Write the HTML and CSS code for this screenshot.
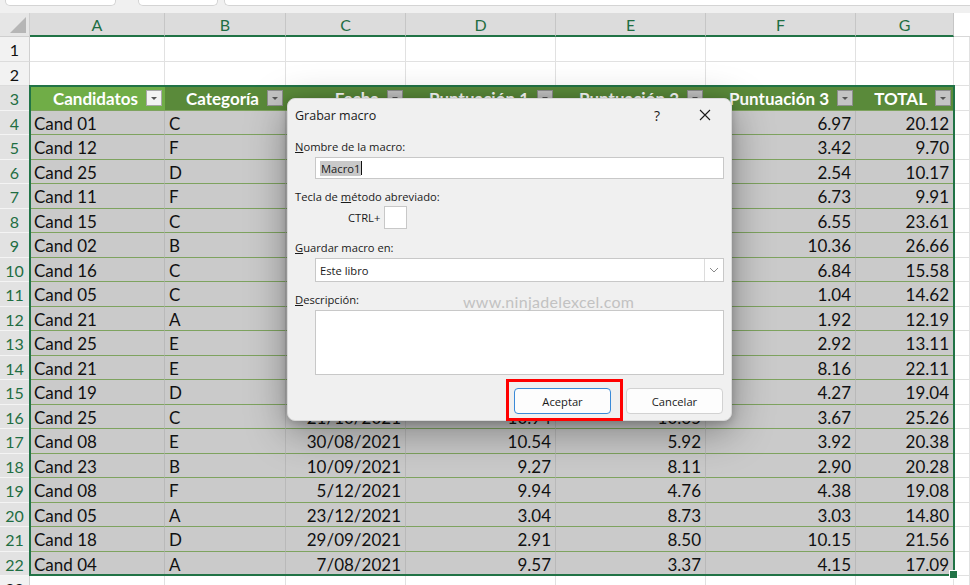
FILE: index.html
```html
<!DOCTYPE html>
<html lang="es">
<head>
  <meta charset="UTF-8">
  <title>Grabar macro</title>
  <link rel="stylesheet" href="styles.css">
</head>
<body>
  <div class="topbar">
    <div class="tb-box tb-name"></div>
    <div class="tb-box tb-mid"></div>
    <div class="tb-box tb-formula"></div>
  </div>

  <div class="sheet">
    <div class="row colhead">
      <div class="corner"><span class="tri"></span></div>
      <div class="ch sel">A</div><div class="ch sel">B</div><div class="ch sel">C</div><div class="ch sel">D</div>
      <div class="ch sel">E</div><div class="ch sel">F</div><div class="ch sel">G</div><div class="ch"></div>
    </div>

    <div class="row">
      <div class="rh">1</div>
      <div class="c"></div><div class="c"></div><div class="c"></div><div class="c"></div><div class="c"></div><div class="c"></div><div class="c"></div><div class="c"></div>
    </div>
    <div class="row">
      <div class="rh">2</div>
      <div class="c"></div><div class="c"></div><div class="c"></div><div class="c"></div><div class="c"></div><div class="c"></div><div class="c"></div><div class="c"></div>
    </div>

    <div class="row thead">
      <div class="rh on">3</div>
      <div class="h active">Candidatos<span class="fb"></span></div>
      <div class="h">Categoría<span class="fb"></span></div>
      <div class="h">Fecha<span class="fb"></span></div>
      <div class="h">Puntuación 1<span class="fb"></span></div>
      <div class="h">Puntuación 2<span class="fb"></span></div>
      <div class="h">Puntuación 3<span class="fb"></span></div>
      <div class="h">TOTAL<span class="fb"></span></div>
      <div class="c"></div>
    </div>

    <!-- C:E of rows 4-15 sit under the dialog -->
    <div class="row tb"><div class="rh on">4</div><div class="d">Cand 01</div><div class="d">C</div><div class="d n"></div><div class="d n"></div><div class="d n"></div><div class="d n">6.97</div><div class="d n">20.12</div><div class="c"></div></div>
    <div class="row tb"><div class="rh on">5</div><div class="d">Cand 12</div><div class="d">F</div><div class="d n"></div><div class="d n"></div><div class="d n"></div><div class="d n">3.42</div><div class="d n">9.70</div><div class="c"></div></div>
    <div class="row tb"><div class="rh on">6</div><div class="d">Cand 25</div><div class="d">D</div><div class="d n"></div><div class="d n"></div><div class="d n"></div><div class="d n">2.54</div><div class="d n">10.17</div><div class="c"></div></div>
    <div class="row tb"><div class="rh on">7</div><div class="d">Cand 11</div><div class="d">F</div><div class="d n"></div><div class="d n"></div><div class="d n"></div><div class="d n">6.73</div><div class="d n">9.91</div><div class="c"></div></div>
    <div class="row tb"><div class="rh on">8</div><div class="d">Cand 15</div><div class="d">C</div><div class="d n"></div><div class="d n"></div><div class="d n"></div><div class="d n">6.55</div><div class="d n">23.61</div><div class="c"></div></div>
    <div class="row tb"><div class="rh on">9</div><div class="d">Cand 02</div><div class="d">B</div><div class="d n"></div><div class="d n"></div><div class="d n"></div><div class="d n">10.36</div><div class="d n">26.66</div><div class="c"></div></div>
    <div class="row tb"><div class="rh on">10</div><div class="d">Cand 16</div><div class="d">C</div><div class="d n"></div><div class="d n"></div><div class="d n"></div><div class="d n">6.84</div><div class="d n">15.58</div><div class="c"></div></div>
    <div class="row tb"><div class="rh on">11</div><div class="d">Cand 05</div><div class="d">C</div><div class="d n"></div><div class="d n"></div><div class="d n"></div><div class="d n">1.04</div><div class="d n">14.62</div><div class="c"></div></div>
    <div class="row tb"><div class="rh on">12</div><div class="d">Cand 21</div><div class="d">A</div><div class="d n"></div><div class="d n"></div><div class="d n"></div><div class="d n">1.92</div><div class="d n">12.19</div><div class="c"></div></div>
    <div class="row tb"><div class="rh on">13</div><div class="d">Cand 25</div><div class="d">E</div><div class="d n"></div><div class="d n"></div><div class="d n"></div><div class="d n">2.92</div><div class="d n">13.11</div><div class="c"></div></div>
    <div class="row tb"><div class="rh on">14</div><div class="d">Cand 21</div><div class="d">E</div><div class="d n"></div><div class="d n"></div><div class="d n"></div><div class="d n">8.16</div><div class="d n">22.11</div><div class="c"></div></div>
    <div class="row tb"><div class="rh on">15</div><div class="d">Cand 19</div><div class="d">D</div><div class="d n"></div><div class="d n"></div><div class="d n"></div><div class="d n">4.27</div><div class="d n">19.04</div><div class="c"></div></div>
    <div class="row tb"><div class="rh on">16</div><div class="d">Cand 25</div><div class="d">C</div><div class="d n">21/10/2021</div><div class="d n">10.94</div><div class="d n">10.65</div><div class="d n">3.67</div><div class="d n">25.26</div><div class="c"></div></div>
    <div class="row tb"><div class="rh on">17</div><div class="d">Cand 08</div><div class="d">E</div><div class="d n">30/08/2021</div><div class="d n">10.54</div><div class="d n">5.92</div><div class="d n">3.92</div><div class="d n">20.38</div><div class="c"></div></div>
    <div class="row tb"><div class="rh on">18</div><div class="d">Cand 23</div><div class="d">B</div><div class="d n">10/09/2021</div><div class="d n">9.27</div><div class="d n">8.11</div><div class="d n">2.90</div><div class="d n">20.28</div><div class="c"></div></div>
    <div class="row tb"><div class="rh on">19</div><div class="d">Cand 08</div><div class="d">F</div><div class="d n">5/12/2021</div><div class="d n">9.94</div><div class="d n">4.76</div><div class="d n">4.38</div><div class="d n">19.08</div><div class="c"></div></div>
    <div class="row tb"><div class="rh on">20</div><div class="d">Cand 05</div><div class="d">A</div><div class="d n">23/12/2021</div><div class="d n">3.04</div><div class="d n">8.73</div><div class="d n">3.03</div><div class="d n">14.80</div><div class="c"></div></div>
    <div class="row tb"><div class="rh on">21</div><div class="d">Cand 18</div><div class="d">D</div><div class="d n">29/09/2021</div><div class="d n">2.91</div><div class="d n">8.50</div><div class="d n">10.15</div><div class="d n">21.56</div><div class="c"></div></div>
    <div class="row tb"><div class="rh on">22</div><div class="d">Cand 04</div><div class="d">A</div><div class="d n">7/08/2021</div><div class="d n">9.57</div><div class="d n">3.37</div><div class="d n">4.15</div><div class="d n">17.09</div><div class="c"></div></div>

    <div class="row">
      <div class="rh">23</div>
      <div class="c"></div><div class="c"></div><div class="c"></div><div class="c"></div><div class="c"></div><div class="c"></div><div class="c"></div><div class="c"></div>
    </div>

    <!-- selected range A3:G22 -->
    <div class="selection"><span class="handle"></span></div>

    <div class="dialog">
      <div class="dlg-title">
        <span>Grabar macro</span>
        <span class="dlg-help">?</span>
        <svg class="dlg-close" width="12" height="12" viewBox="0 0 12 12"><path d="M1 1L11 11M11 1L1 11" stroke="#1a1a1a" stroke-width="1.1" fill="none"/></svg>
      </div>
      <div class="dlg-body">
        <div class="lbl"><u>N</u>ombre de la macro:</div>
        <div class="field name"><span class="seltext">Macro1</span><span class="caret"></span></div>

        <div class="lbl">Tecla de <u>m</u>étodo abreviado:</div>
        <div class="shortcut"><span>CTRL+</span><span class="keybox"></span></div>

        <div class="lbl"><u>G</u>uardar macro en:</div>
        <div class="field combo">
          <span>Este libro</span>
          <span class="combo-btn">
            <svg width="10" height="6" viewBox="0 0 10 6"><path d="M1 1L5 5L9 1" stroke="#8a8a8a" stroke-width="1" fill="none"/></svg>
          </span>
        </div>

        <div class="lbl"><u>D</u>escripción:</div>
        <div class="field desc"></div>

        <div class="buttons">
          <button class="btn primary">Aceptar</button>
          <button class="btn">Cancelar</button>
        </div>
      </div>
      <div class="watermark">www.ninjadelexcel.com</div>
      <div class="highlight"></div>
    </div>
  </div>
</body>
</html>
```

FILE: styles.css
```css
body { margin: 0; width: 970px; height: 585px; overflow: hidden; background: #fff; font-family: Lato, "Liberation Sans", sans-serif; }

.topbar { height: 13px; background: #f0f0f0; display: flex; }
.tb-box { height: 5px; background: #fff; border: 1px solid #d4d4d4; border-top: none; border-radius: 0 0 5px 5px; }
.tb-name { margin-left: 5px; width: 109px; }
.tb-mid { margin-left: 22px; width: 78px; }
.tb-formula { margin-left: 6px; flex: 1; border-right: none; border-radius: 0 0 0 5px; }

.sheet { position: relative; }
.row { display: grid; grid-template-columns: 30px 135px 121px 120px 150px 150px 150px 98px 16px; height: 24.5px; }
.row > div { box-sizing: border-box; position: relative; display: flex; align-items: center; padding-top: 2px; font-size: 17px; color: #111; white-space: nowrap; overflow: hidden; }

.colhead { height: 24px; }
.colhead > div { padding-top: 0; }
.corner { background: #e6e6e6; border-right: 1px solid #cfcfcf; border-bottom: 1px solid #cfcfcf; }
.tri { position: absolute; right: 3px; bottom: 3px; width: 0; height: 0; border-left: 16px solid transparent; border-bottom: 16px solid #b6b6b6; }
.ch { justify-content: center; background: #fff; border-bottom: 1px solid #d8d8d8; font-size: 16px !important; }
.ch.sel { background: #dcdcdc; color: #1f6e43 !important; border-right: 1px solid #c6c6c6; border-bottom: 2px solid #217346; }

.rh { justify-content: center; background: #f2f2f2; border-right: 1px solid #d0d0d0; border-bottom: 1px solid #dcdcdc; font-size: 16px !important; }
.rh.on { background: #e2e2e2; color: #1f6e43 !important; border-bottom-color: #f4f4f4; }

.c { border-right: 1px solid #e1e1e1; border-bottom: 1px solid #e1e1e1; }

.h { justify-content: flex-end; padding-right: 27px; background: #5a8a3a; color: #fff !important; font-weight: bold; border-bottom: 1px solid #7ea35f; }
.h.active { background: #70ad47; }
.fb { position: absolute; right: 3px; top: 4px; width: 16px; height: 16px; box-sizing: border-box; background: #c4c4c4; border: 1px solid #8e8e8e; }
.fb::after { content: ""; position: absolute; left: 4px; top: 6px; border-left: 3px solid transparent; border-right: 3px solid transparent; border-top: 3px solid #555; }
.h.active .fb { background: #f3f3f3; border-color: #a8a8a8; }

.d { padding: 0 4px; background: #cacaca; border-right: 1px solid #b9b9b9; border-bottom: 1px solid #7ea35f; }
.d.n { justify-content: flex-end; }

.selection { position: absolute; left: 29px; top: 72px; width: 926px; height: 491px; box-sizing: border-box; border: 2px solid #217346; pointer-events: none; }
.handle { position: absolute; right: -5px; bottom: -5px; width: 7px; height: 7px; background: #217346; border: 1px solid #fff; }

.dialog { position: absolute; left: 287px; top: 85px; width: 445px; height: 323px; background: #f0f0f0; border-radius: 8px; border: 1px solid #d8d8d8; box-sizing: border-box;
  box-shadow: 0 10px 40px rgba(0,0,0,0.38), 0 2px 8px rgba(0,0,0,0.2); font-family: "Open Sans", "Noto Sans", sans-serif; font-size: 11.2px; color: #1a1a1a; }
.dlg-title { height: 32px; display: flex; align-items: center; padding-left: 7px; font-size: 12.5px; }
.dlg-help { margin-left: auto; font-size: 14px; margin-right: 39px; }
.dlg-close { margin-right: 20px; }
.dlg-body { padding: 8px 7px 0 7px; display: flex; flex-direction: column; }
.lbl { height: 16px; line-height: 16px; }
.field { margin-left: 20px; width: 409px; box-sizing: border-box; background: #fff; border: 1px solid #c8c8c8; display: flex; align-items: center; }
.name { height: 22px; margin-top: 2px; margin-bottom: 10px; padding-left: 4px; }
.seltext { background: #c9c9c9; padding: 0 1px; }
.caret { width: 1px; height: 14px; background: #111; }
.shortcut { height: 23px; margin-top: 1px; margin-bottom: 11px; padding-left: 53px; display: flex; align-items: center; gap: 4px; }
.keybox { width: 23px; height: 23px; box-sizing: border-box; background: #fff; border: 1px solid #c8c8c8; }
.combo { height: 24px; margin-top: 2px; margin-bottom: 10px; padding-left: 4px; justify-content: space-between; }
.combo-btn { width: 18px; height: 22px; border-left: 1px solid #dcdcdc; display: flex; align-items: center; justify-content: center; }
.desc { height: 65px; margin-top: 2px; }
.buttons { display: flex; justify-content: flex-end; gap: 15px; margin-top: 13px; margin-right: 1px; }
.btn { width: 97px; height: 26px; box-sizing: border-box; background: #fdfdfd; border: 1px solid #d2d2d2; border-radius: 4px; font-family: inherit; font-size: 11.2px; color: #1a1a1a; }
.btn.primary { border: 1px solid #3a8ad8; }
.watermark { position: absolute; left: 175px; top: 193px; font-family: Lato, sans-serif; font-size: 16px; letter-spacing: 0.3px; color: #c2c2c2; }
.highlight { position: absolute; left: 218px; top: 280px; width: 117px; height: 42px; box-sizing: border-box; border: 3px solid #ff0000; }
```
